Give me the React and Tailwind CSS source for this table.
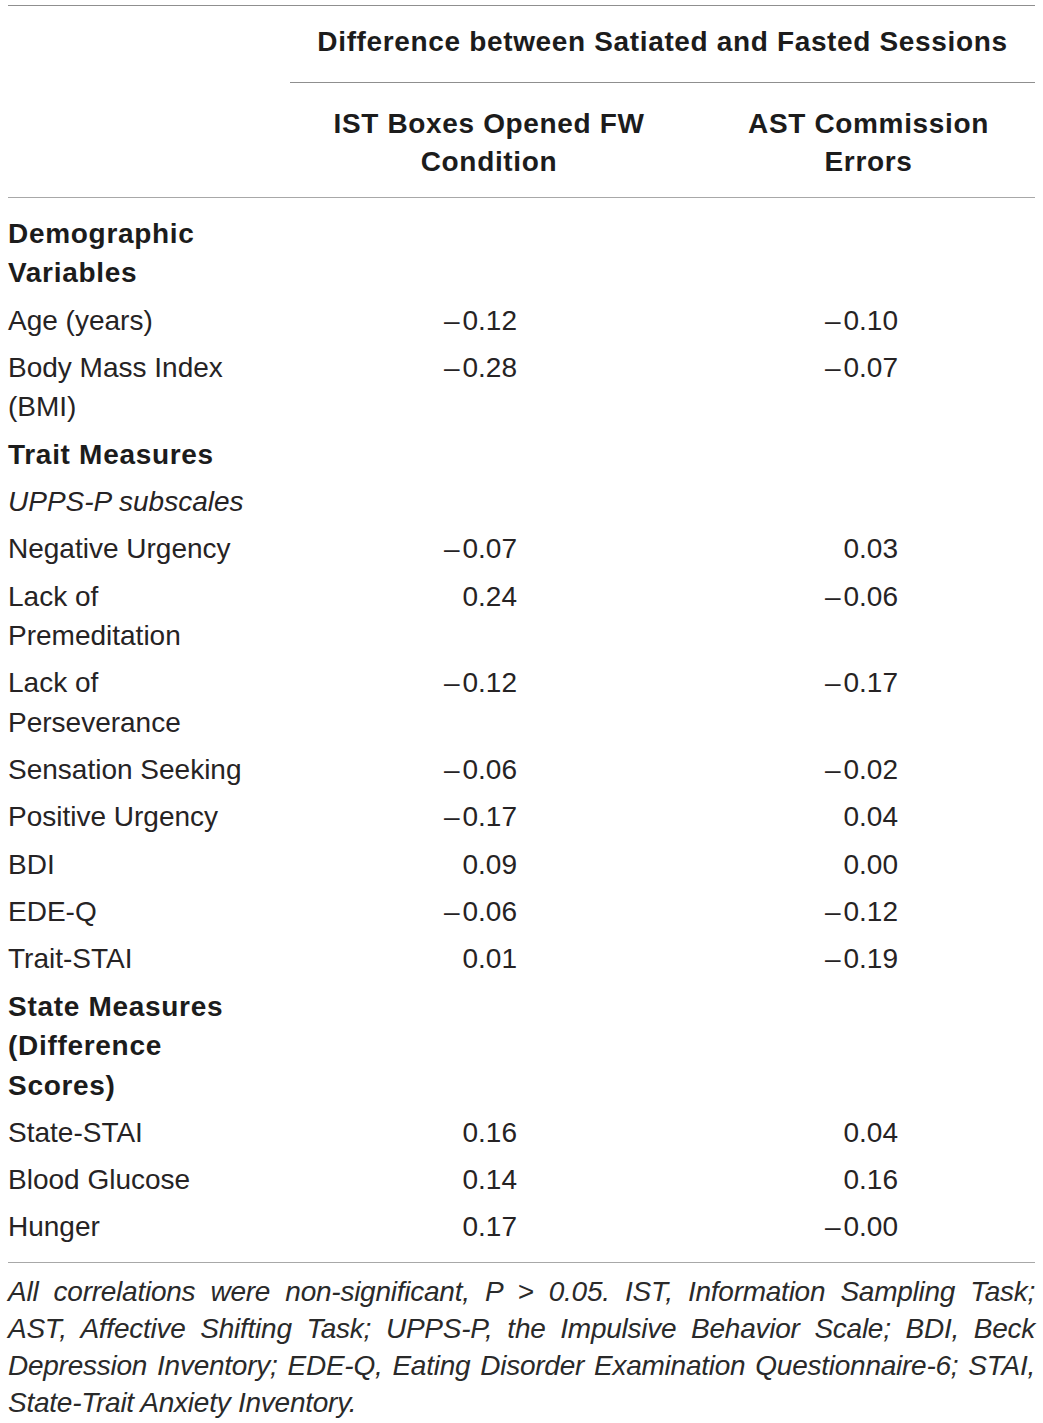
import React from 'react';

const rows = [
  { label: ['Demographic', 'Variables'], kind: 'head' },
  { label: ['Age (years)'], a: '–0.12', b: '–0.10' },
  { label: ['Body Mass Index', '(BMI)'], a: '–0.28', b: '–0.07' },
  { label: ['Trait Measures'], kind: 'head' },
  { label: ['UPPS-P subscales'], kind: 'italic' },
  { label: ['Negative Urgency'], a: '–0.07', b: '0.03' },
  { label: ['Lack of', 'Premeditation'], a: '0.24', b: '–0.06' },
  { label: ['Lack of', 'Perseverance'], a: '–0.12', b: '–0.17' },
  { label: ['Sensation Seeking'], a: '–0.06', b: '–0.02' },
  { label: ['Positive Urgency'], a: '–0.17', b: '0.04' },
  { label: ['BDI'], a: '0.09', b: '0.00' },
  { label: ['EDE-Q'], a: '–0.06', b: '–0.12' },
  { label: ['Trait-STAI'], a: '0.01', b: '–0.19' },
  { label: ['State Measures', '(Difference', 'Scores)'], kind: 'head' },
  { label: ['State-STAI'], a: '0.16', b: '0.04' },
  { label: ['Blood Glucose'], a: '0.14', b: '0.16' },
  { label: ['Hunger'], a: '0.17', b: '–0.00' },
];

const footer = [
  'All correlations were non-significant, P > 0.05. IST, Information Sampling Task;',
  'AST, Affective Shifting Task; UPPS-P, the Impulsive Behavior Scale; BDI, Beck',
  'Depression Inventory; EDE-Q, Eating Disorder Examination Questionnaire-6; STAI,',
  'State-Trait Anxiety Inventory.',
];

// numbers: en dash sits a little apart from the digits in the source
const Num = ({ v }) =>
  v && v.startsWith('–') ? (
    <span>
      <span className="pr-[3px]">–</span>
      {v.slice(1)}
    </span>
  ) : (
    <span>{v}</span>
  );

const Row = ({ r }) => {
  const labelCls =
    r.kind === 'head'
      ? 'font-bold tracking-[0.7px] text-[#1c1c1c]'
      : r.kind === 'italic'
        ? 'italic'
        : '';
  return (
    <div className="grid grid-cols-[282px_227px_381px] py-[3.9px] leading-[39.5px]">
      <div className={labelCls}>
        {r.label.map((l, i) => (
          <div key={i}>{l}</div>
        ))}
      </div>
      <div className="text-right">
        <Num v={r.a} />
      </div>
      <div className="text-right">
        <Num v={r.b} />
      </div>
    </div>
  );
};

export default function App() {
  return (
    <div
      className="w-[1043px] bg-white px-[8px] pt-[5px] pb-[10px] text-[28px] text-[#262324]"
      style={{ fontFamily: '"Liberation Sans", Arial, sans-serif' }}
    >
      <div className="border-t border-[#8f8f8f]" />
      <div className="flex">
        <div className="w-[282px] shrink-0" />
        <div className="flex-1 border-b border-[#8f8f8f]">
          <div className="flex h-[76px] items-center justify-center pb-[4px] font-bold tracking-[0.65px] text-[#1c1c1c]">
            Difference between Satiated and Fasted Sessions
          </div>
        </div>
      </div>
      <div className="flex h-[115px] items-center border-b border-[#a8a8a8] pt-[6px] font-bold leading-[38px] tracking-[0.65px] text-[#1c1c1c]">
        <div className="w-[282px] shrink-0" />
        <div className="w-[398px] shrink-0 text-center">
          IST Boxes Opened FW
          <br />
          Condition
        </div>
        <div className="flex-1 pl-[14px] text-center">
          AST Commission
          <br />
          Errors
        </div>
      </div>
      <div className="border-b border-[#a8a8a8] pt-[12px] pb-[11px]">
        {rows.map((r, i) => (
          <Row key={i} r={r} />
        ))}
      </div>
      <div className="pt-[10px] text-[28px] italic leading-[37px] tracking-[-0.25px] text-[#2a2a2a]">
        {footer.map((l, i) => (
          <div
            key={i}
            className={
              i < footer.length - 1
                ? 'whitespace-nowrap text-justify [text-align-last:justify]'
                : 'whitespace-nowrap'
            }
          >
            {l}
          </div>
        ))}
      </div>
    </div>
  );
}
